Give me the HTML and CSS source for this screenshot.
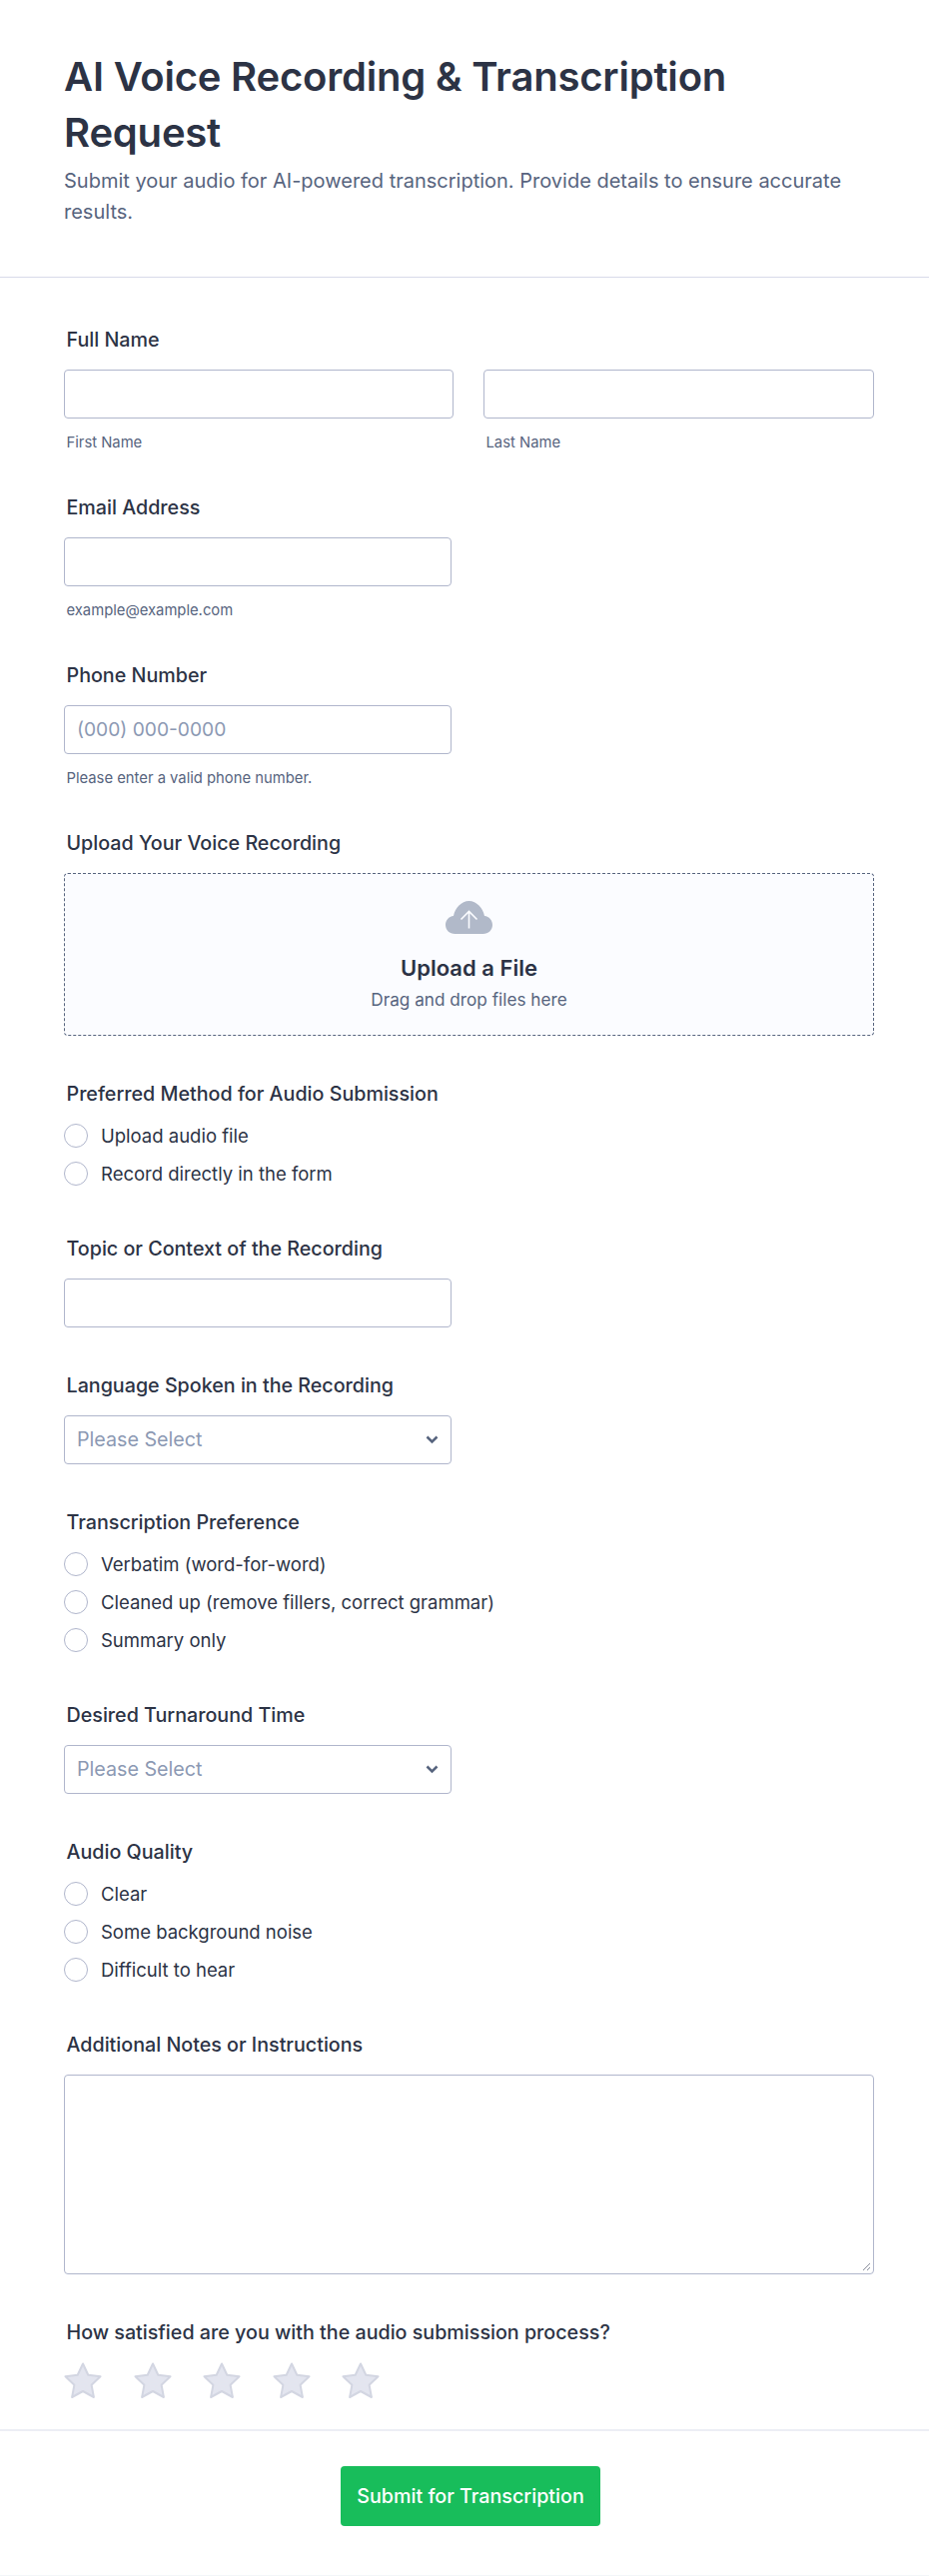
FILE: index.html
```html
<!DOCTYPE html>
<html lang="en">
<head>
<meta charset="utf-8">
<title>AI Voice Recording &amp; Transcription Request</title>
<link rel="stylesheet" href="styles.css">
</head>
<body>
<main class="form">
  <header class="head">
    <h1>AI Voice Recording &amp; Transcription Request</h1>
    <p>Submit your audio for AI-powered transcription. Provide details to ensure accurate results.</p>
  </header>
  <div class="fields">
    <section class="field">
      <div class="label">Full Name</div>
      <div class="two">
        <div><div class="input"></div><div class="sub">First Name</div></div>
        <div><div class="input"></div><div class="sub">Last Name</div></div>
      </div>
    </section>
    <section class="field">
      <div class="label">Email Address</div>
      <div class="input half"></div>
      <div class="sub">example@example.com</div>
    </section>
    <section class="field">
      <div class="label">Phone Number</div>
      <div class="input half ph phone">(000) 000-0000</div>
      <div class="sub">Please enter a valid phone number.</div>
    </section>
    <section class="field">
      <div class="label">Upload Your Voice Recording</div>
      <div class="drop">
        <svg class="cloud" width="47" height="33" viewBox="0 0 47 33"><path class="cloud-body" d="M9.500 33C4 33 0 29 0 24c0-4.600 3.300-8.300 8-8.900C9.500 7 16 0 23.500 0S37.500 7 39 15.100c4.700.6 8 4.300 8 8.900 0 5-4 9-9.500 9z"/><path class="cloud-arrow" d="M23.500 27.500V10.500M15.500 18.500l8-8 8 8"/></svg>
        <div class="drop-title">Upload a File</div>
        <div class="drop-sub">Drag and drop files here</div>
      </div>
    </section>
    <section class="field">
      <div class="label">Preferred Method for Audio Submission</div>
      <div class="radios">
        <div class="radio"><i></i>Upload audio file</div>
        <div class="radio"><i></i>Record directly in the form</div>
      </div>
    </section>
    <section class="field">
      <div class="label">Topic or Context of the Recording</div>
      <div class="input half"></div>
    </section>
    <section class="field">
      <div class="label">Language Spoken in the Recording</div>
      <div class="input half ph select">Please Select
        <svg class="chev" width="13" height="9" viewBox="0 0 13 9"><path d="M1.500 1.500 6.500 6.500l5-5"/></svg>
      </div>
    </section>
    <section class="field">
      <div class="label">Transcription Preference</div>
      <div class="radios">
        <div class="radio"><i></i>Verbatim (word-for-word)</div>
        <div class="radio"><i></i>Cleaned up (remove fillers, correct grammar)</div>
        <div class="radio"><i></i>Summary only</div>
      </div>
    </section>
    <section class="field">
      <div class="label">Desired Turnaround Time</div>
      <div class="input half ph select">Please Select
        <svg class="chev" width="13" height="9" viewBox="0 0 13 9"><path d="M1.500 1.500 6.500 6.500l5-5"/></svg>
      </div>
    </section>
    <section class="field">
      <div class="label">Audio Quality</div>
      <div class="radios">
        <div class="radio"><i></i>Clear</div>
        <div class="radio"><i></i>Some background noise</div>
        <div class="radio"><i></i>Difficult to hear</div>
      </div>
    </section>
    <section class="field">
      <div class="label">Additional Notes or Instructions</div>
      <div class="textarea">
        <svg class="grip" width="10" height="10" viewBox="0 0 10 10"><path d="M9 2 2 9M9 6 6 9"/></svg>
      </div>
    </section>
    <section class="field last">
      <div class="label">How satisfied are you with the audio submission process?</div>
      <div class="stars">
        <svg class="star" width="38" height="36" viewBox="0 0 38 36"><path d="M19 1.500l5.300 11.200 12.200 1.600-8.900 8.500 2.300 12.200L19 29l-10.900 6 2.300-12.200-8.900-8.500 12.200-1.600z"/></svg>
        <svg class="star" width="38" height="36" viewBox="0 0 38 36"><path d="M19 1.500l5.300 11.200 12.200 1.600-8.900 8.500 2.300 12.200L19 29l-10.900 6 2.300-12.200-8.900-8.500 12.200-1.600z"/></svg>
        <svg class="star" width="38" height="36" viewBox="0 0 38 36"><path d="M19 1.500l5.300 11.200 12.200 1.600-8.900 8.500 2.300 12.200L19 29l-10.900 6 2.300-12.200-8.900-8.500 12.200-1.600z"/></svg>
        <svg class="star" width="38" height="36" viewBox="0 0 38 36"><path d="M19 1.500l5.300 11.200 12.200 1.600-8.900 8.500 2.300 12.200L19 29l-10.900 6 2.300-12.200-8.900-8.500 12.200-1.600z"/></svg>
        <svg class="star" width="38" height="36" viewBox="0 0 38 36"><path d="M19 1.500l5.300 11.200 12.200 1.600-8.900 8.500 2.300 12.200L19 29l-10.900 6 2.300-12.200-8.900-8.500 12.200-1.600z"/></svg>
      </div>
    </section>
  </div>
  <footer class="foot"><button class="submit" type="button">Submit for Transcription</button></footer>
</main>
</body>
</html>
```
FILE: styles.css
```css
* { box-sizing: border-box; }
html, body { margin: 0; padding: 0; background: #fff; }
body { font-family: Inter, "Liberation Sans", sans-serif; color: #2c3345; }
.form { width: 930px; }
.head { padding: 49px 64px 0; border-bottom: 1px solid #d8dae9; height: 278px; }
h1 { margin: 0; font-size: 40px; line-height: 56px; font-weight: 600; color: #2c3345; letter-spacing: -0.2px; }
.head p { margin: 5px 0 0; font-size: 20px; line-height: 31px; color: #57647e; }
.fields { padding: 50px 55px 0 64px; display: flex; flex-direction: column; }
.field { margin-bottom: 46px; }
.field.last { margin-bottom: 31px; }
.label { padding-left: 2.500px; font-size: 19.700px; line-height: 24px; font-weight: 500; color: #2c3345; margin-bottom: 18px; }
.two { display: grid; grid-template-columns: 390px 391px; gap: 30px; }
.input { height: 49px; border: 1px solid #b0b6cc; border-radius: 4px; background: #fff; font-size: 19.700px; line-height: 47px; padding: 0 12px; }
.half { width: 388px; }
.ph { color: #8c99b3; }
.phone { font-size: 19.200px; }
.select { display: flex; align-items: center; justify-content: space-between; }
.chev { fill: none; stroke: #57647e; stroke-width: 2.500; }
.sub { padding: 17px 0 0 2.500px; font-size: 14.800px; line-height: 14px; color: #57647e; }
.drop { height: 163px; border: 1px dashed #57647e; border-radius: 4px; background: #fbfcff; display: flex; flex-direction: column; align-items: center; padding-top: 27px; }
.cloud { display: block; }
.cloud-body { fill: #b1b9c9; }
.cloud-arrow { fill: none; stroke: #fbfcff; stroke-width: 1.600; }
.drop-title { margin-top: 20px; font-size: 22px; line-height: 28px; font-weight: 600; color: #2c3345; }
.drop-sub { margin-top: 6px; font-size: 17.200px; line-height: 24px; color: #57647e; }
.radios { display: flex; flex-direction: column; gap: 14px; padding-bottom: 5px; }
.radio { display: flex; align-items: center; height: 24px; font-size: 18.500px; color: #2c3345; }
.radio i { width: 24px; height: 24px; border: 1px solid #b0b6cc; border-radius: 50%; margin-right: 13px; background: #fff; flex: none; }
.textarea { height: 200px; border: 1px solid #b0b6cc; border-radius: 4px; display: flex; align-items: flex-end; justify-content: flex-end; padding: 2px; }
.grip { fill: none; stroke: #8a8f9c; stroke-width: 1; }
.stars { display: flex; gap: 31.500px; }
.star { fill: #e3e5ef; stroke: #d3d6e2; stroke-width: 2; stroke-linejoin: round; }
.foot { border-top: 2px solid #eceef5; border-bottom: 1px solid #f3f6f9; padding-top: 35px; display: flex; justify-content: center; height: 147px; }
.submit { width: 260px; height: 60px; margin-left: 12px; background: #18bd5b; border: 0; border-radius: 4px; color: #fff; font: 500 19.700px Inter, "Liberation Sans", sans-serif; }
```
